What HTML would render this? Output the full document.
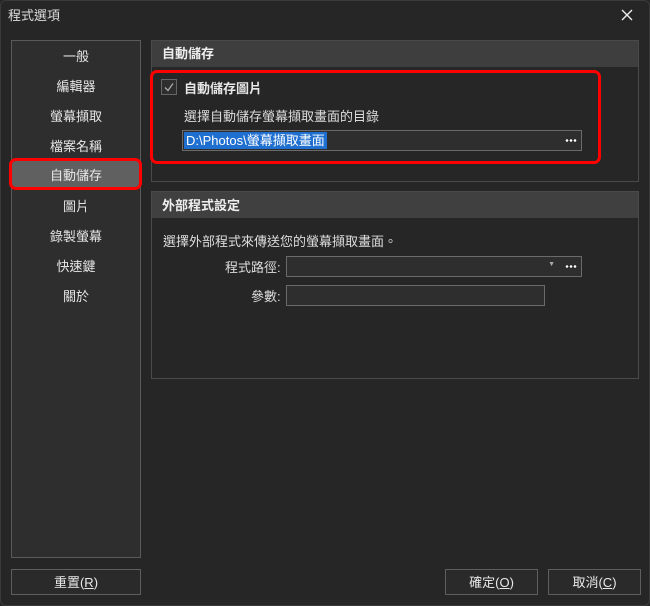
<!DOCTYPE html>
<html><head><meta charset="utf-8"><style>
*{margin:0;padding:0;box-sizing:border-box}
body{width:650px;height:606px;background:#262626;font-family:"Liberation Sans","Noto Sans CJK TC",sans-serif;font-size:13px;color:#e8e8e8;position:relative;overflow:hidden}
.a{position:absolute}
.win{left:0;top:0;width:650px;height:606px;border:1px solid #3a3a3a;border-radius:6px}
.side{left:11px;top:40px;width:130px;height:518px;background:#2e2e2e;border:1px solid #5a5a5a}
.it{position:absolute;left:0;width:128px;text-align:center;font-size:13px;color:#e6e6e6}
.panel{border:1px solid #4a4a4a;background:#262626}
.hd{position:absolute;left:0;top:0;right:0;background:#3e3e3e;font-weight:bold;font-size:13px;padding-left:10px;color:#eee}
.inp{background:#2e2e2e;border:1px solid #6a6a6a}
.btn{border:1px solid #5e5e5e;background:#2a2a2a;text-align:center;line-height:25px;font-size:13px}
.red{border:3px solid #f00;border-radius:7px}
.dots{position:absolute;right:4px;top:5px;width:12px;height:3px;background:radial-gradient(circle,#fff 1.2px,transparent 1.4px) 0 0/4px 3px repeat-x}
</style></head><body>
<div class="a win"></div>
<div class="a" style="left:8px;top:5px;font-size:13px;color:#ddd">程式選項</div>
<svg class="a" style="left:621px;top:9px" width="12" height="12" viewBox="0 0 12 12"><path d="M1 1L11 11M11 1L1 11" stroke="#eee" stroke-width="1.4"/></svg>

<div class="a side">
<div class="it" style="top:5px">一般</div>
<div class="it" style="top:35px">編輯器</div>
<div class="it" style="top:65px">螢幕擷取</div>
<div class="it" style="top:95px">檔案名稱</div>
<div class="it" style="top:155px">圖片</div>
<div class="it" style="top:185px">錄製螢幕</div>
<div class="it" style="top:215px">快速鍵</div>
<div class="it" style="top:245px">關於</div>
</div>
<div class="a red" style="left:9px;top:158px;width:133px;height:32px;background:#606060"></div>
<div class="a" style="left:11px;top:165px;width:130px;text-align:center">自動儲存</div>

<div class="a panel" style="left:151px;top:40px;width:488px;height:142px">
<div class="hd" style="height:26px;line-height:25px">自動儲存</div>
</div>
<div class="a red" style="left:150px;top:70px;width:451px;height:94px"></div>
<div class="a" style="left:161px;top:79px;width:16px;height:16px;border:1px solid #666;background:#2e2e2e"><svg width="14" height="14" viewBox="0 0 14 14" style="position:absolute;left:0;top:0"><path d="M3 7.5L6 10.5L11 3.5" stroke="#aaa" stroke-width="1.3" fill="none"/></svg></div>
<div class="a" style="left:184px;top:78px;font-weight:bold">自動儲存圖片</div>
<div class="a" style="left:184px;top:106px;color:#ddd">選擇自動儲存螢幕擷取畫面的目錄</div>
<div class="a inp" style="left:182px;top:130px;width:400px;height:21px">
<span style="position:absolute;left:1px;top:1px;height:17px;background:#1f6fd0;color:#fff;padding:0 2px;line-height:17px">D:\Photos\螢幕擷取畫面</span>
<span class="dots" style="top:8px"></span></div>

<div class="a panel" style="left:151px;top:191px;width:488px;height:188px">
<div class="hd" style="height:26px;line-height:27px;background:#404040">外部程式設定</div>
</div>
<div class="a" style="left:163px;top:231px;color:#ddd">選擇外部程式來傳送您的螢幕擷取畫面。</div>
<div class="a" style="left:225px;top:257px;color:#ddd">程式路徑:</div>
<div class="a inp" style="left:286px;top:256px;width:296px;height:21px"><span style="position:absolute;right:26px;top:4px;font-size:7px;color:#aaa">▼</span><span class="dots" style="top:8px"></span></div>
<div class="a" style="left:251px;top:286px;color:#ddd">參數:</div>
<div class="a inp" style="left:286px;top:285px;width:259px;height:21px"></div>

<div class="a btn" style="left:11px;top:569px;width:130px;height:26px">重置(<u>R</u>)</div>
<div class="a btn" style="left:445px;top:569px;width:93px;height:26px">確定(<u>O</u>)</div>
<div class="a btn" style="left:548px;top:569px;width:93px;height:26px">取消(<u>C</u>)</div>
</body></html>
